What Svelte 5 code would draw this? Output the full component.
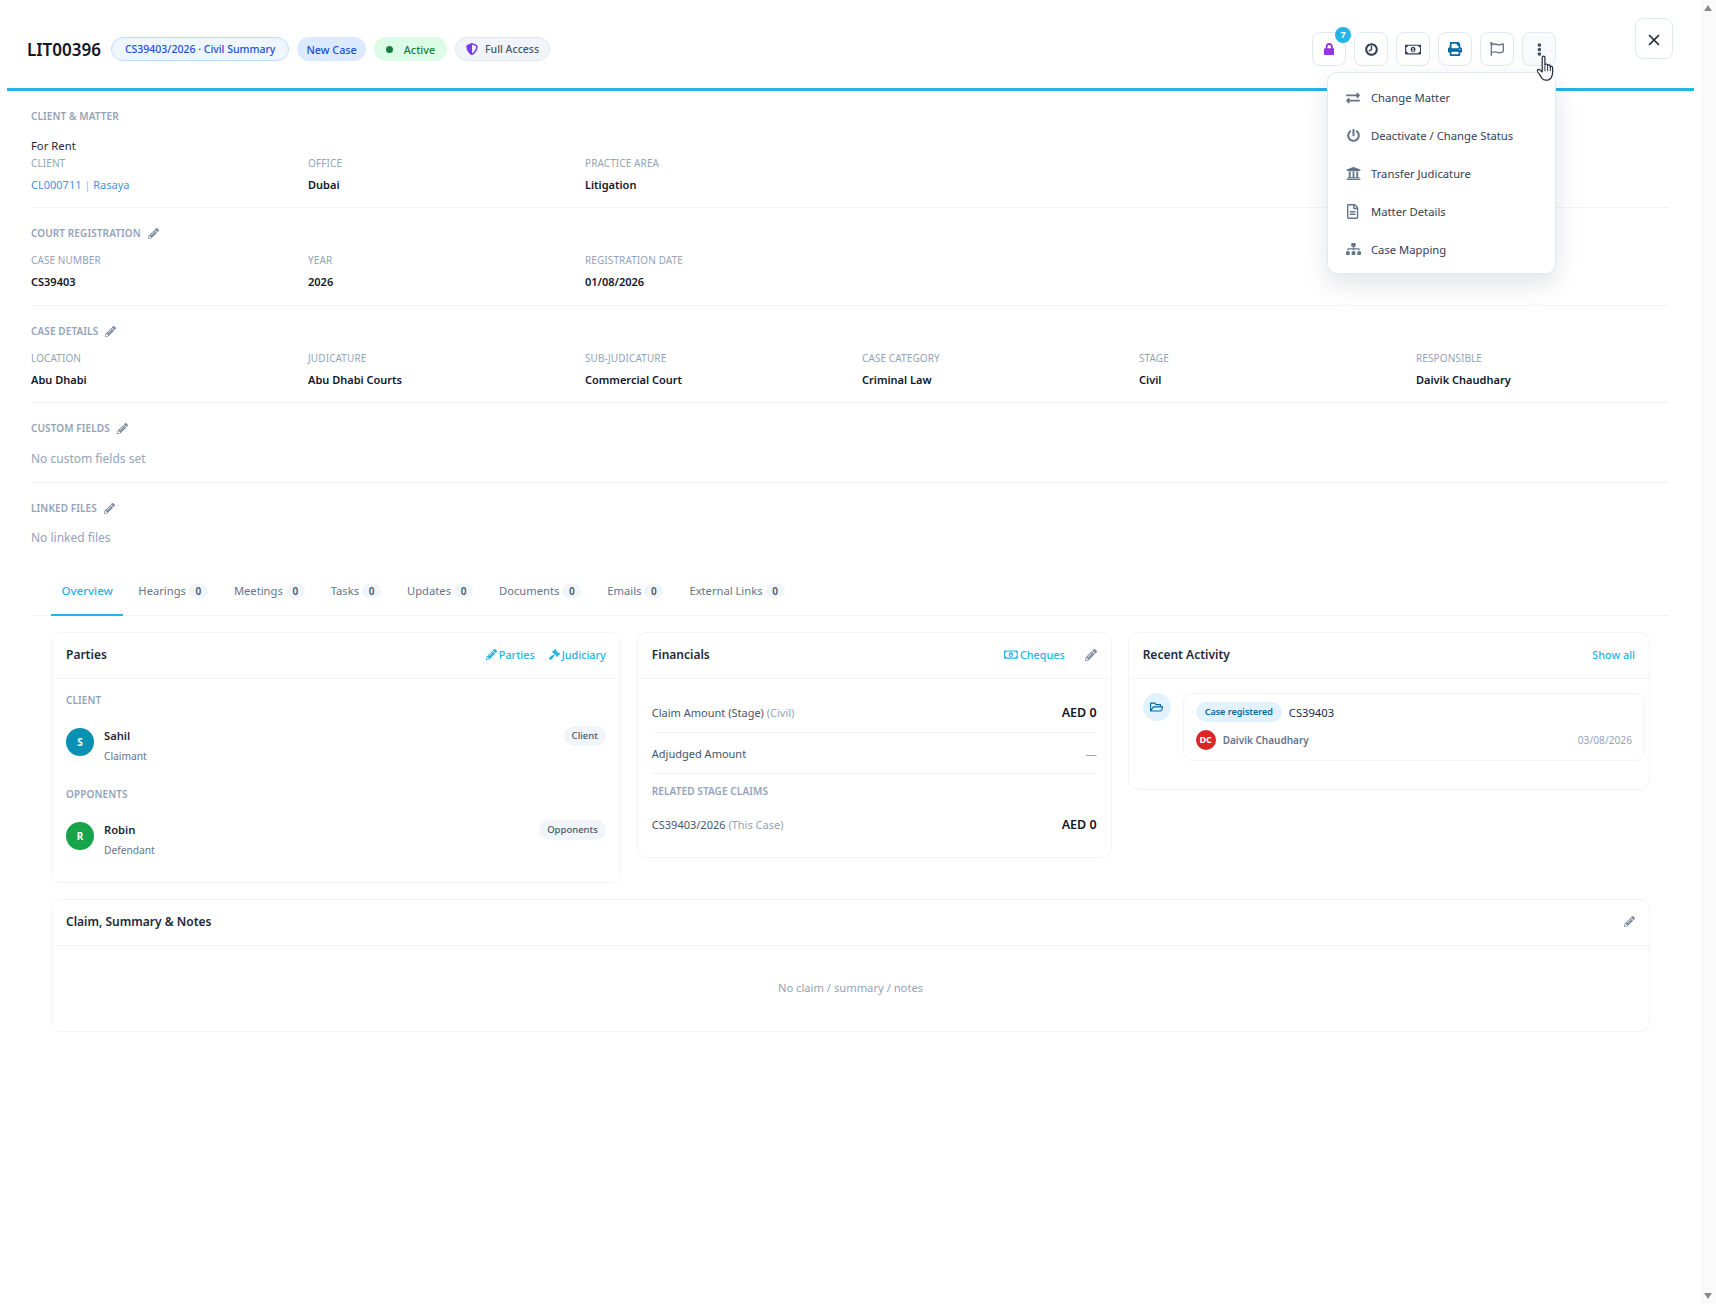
<script lang="ts">
  const ICONS: Record<string, [number, string]> = {
    pen: [512, 'M497.9 142.1l-46.1 46.1c-4.7 4.7-12.3 4.7-17 0l-111-111c-4.7-4.7-4.7-12.3 0-17l46.1-46.1c18.7-18.7 49.1-18.7 67.9 0l60.1 60.1c18.8 18.7 18.8 49.1 0 67.9zM284.2 99.8L21.6 362.4.4 483.9c-2.9 16.4 11.4 30.6 27.8 27.8l121.5-21.3 262.6-262.6c4.7-4.7 4.7-12.3 0-17l-111-111c-4.8-4.7-12.4-4.7-17.1 0zM124.1 339.9c-5.5-5.5-5.5-14.3 0-19.8l154-154c5.5-5.5 14.3-5.5 19.8 0s5.5 14.3 0 19.8l-154 154c-5.5 5.5-14.3 5.5-19.8 0zM88 424h48v36.3l-64.5 11.3-31.1-31.1L51.7 376H88v48z'],
    lock: [448, 'M400 224h-24v-72C376 68.2 307.8 0 224 0S72 68.2 72 152v72H48c-26.5 0-48 21.500-48 48v192c0 26.500 21.500 48 48 48h352c26.500 0 48-21.500 48-48V272c0-26.500-21.500-48-48-48zm-104 0H152v-72c0-39.700 32.300-72 72-72s72 32.300 72 72v72z'],
    dots: [192, 'M96 184c39.800 0 72 32.200 72 72s-32.200 72-72 72-72-32.200-72-72 32.200-72 72-72zM24 80c0 39.800 32.200 72 72 72s72-32.200 72-72S135.800 8 96 8 24 40.200 24 80zm0 352c0 39.800 32.200 72 72 72s72-32.200 72-72-32.200-72-72-72-72 32.200-72 72z'],
    print: [512, 'M448 192V77.250c0-8.490-3.370-16.620-9.370-22.630L393.370 9.370c-6-6-14.140-9.370-22.630-9.370H96C78.330 0 64 14.330 64 32v160c-35.350 0-64 28.650-64 64v112c0 8.840 7.160 16 16 16h48v96c0 17.670 14.330 32 32 32h320c17.670 0 32-14.330 32-32v-96h48c8.840 0 16-7.160 16-16V256c0-35.350-28.650-64-64-64zm-64 256H128v-96h256v96zm0-224H128V64h192v48c0 8.840 7.160 16 16 16h48v96zm48 72c-13.250 0-24-10.750-24-24 0-13.260 10.750-24 24-24s24 10.740 24 24c0 13.250-10.750 24-24 24z'],
    exchange: [512, 'M0 168v-16c0-13.255 10.745-24 24-24h360V80c0-21.367 25.899-32.042 40.971-16.971l80 80c9.372 9.373 9.372 24.569 0 33.941l-80 80C409.956 271.982 384 261.456 384 240v-48H24c-13.255 0-24-10.745-24-24zm488 152H128v-48c0-21.314-25.862-32.080-40.971-16.971l-80 80c-9.372 9.373-9.372 24.569 0 33.941l80 80C102.057 463.997 128 453.437 128 432v-48h360c13.255 0 24-10.745 24-24v-16c0-13.255-10.745-24-24-24z'],
    power: [512, 'M400 54.100c63 45 104 118.600 104 201.900 0 136.800-110.800 247.700-247.500 248C120 504.300 8.200 393 8 256.400 7.900 173.100 48.900 99.300 111.800 54.200c11.700-8.300 28-4.800 35 7.700L162.600 90c5.900 10.500 3.100 23.800-6.600 31-41.500 30.800-68 79.600-68 134.900-.1 92.300 74.500 168.100 168 168.100 91.600 0 168.600-74.200 168-169.100-.3-51.800-24.700-101.800-68.100-134-9.700-7.200-12.400-20.500-6.500-30.900l15.800-28.100c7-12.400 23.200-16.100 34.800-7.800zM296 264V24c0-13.300-10.700-24-24-24h-32c-13.300 0-24 10.700-24 24v240c0 13.300 10.700 24 24 24h32c13.300 0 24-10.700 24-24z'],
    bank: [512, 'M496 128v16a8 8 0 0 1-8 8h-24v12c0 6.627-5.373 12-12 12H60c-6.627 0-12-5.373-12-12v-12H24a8 8 0 0 1-8-8v-16a8 8 0 0 1 4.941-7.392l232-88a7.996 7.996 0 0 1 6.118 0l232 88A8 8 0 0 1 496 128zm-24 304H40c-13.255 0-24 10.745-24 24v16a8 8 0 0 0 8 8h464a8 8 0 0 0 8-8v-16c0-13.255-10.745-24-24-24zM96 192v192H60c-6.627 0-12 5.373-12 12v20h416v-20c0-6.627-5.373-12-12-12h-36V192h-64v192h-64V192h-64v192h-64V192H96z'],
    sitemap: [640, 'M128 352H32c-17.670 0-32 14.330-32 32v96c0 17.670 14.330 32 32 32h96c17.670 0 32-14.330 32-32v-96c0-17.670-14.330-32-32-32zm-24-80h192v48h48v-48h192v48h48v-57.590c0-21.170-17.230-38.410-38.410-38.410H344v-64h40c17.670 0 32-14.330 32-32V32c0-17.670-14.330-32-32-32H256c-17.670 0-32 14.330-32 32v96c0 17.670 14.330 32 32 32h40v64H94.410C73.230 224 56 241.230 56 262.410V320h48v-48zm264 80h-96c-17.670 0-32 14.330-32 32v96c0 17.670 14.330 32 32 32h96c17.670 0 32-14.330 32-32v-96c0-17.670-14.330-32-32-32zm240 0h-96c-17.670 0-32 14.330-32 32v96c0 17.670 14.330 32 32 32h96c17.670 0 32-14.330 32-32v-96c0-17.670-14.330-32-32-32z'],
    gavel: [512, 'M504.971 199.362l-22.627-22.627c-9.373-9.373-24.569-9.373-33.941 0l-5.657 5.657L329.608 69.255l5.657-5.657c9.373-9.373 9.373-24.569 0-33.941L312.638 7.029c-9.373-9.373-24.569-9.373-33.941 0L154.246 131.480c-9.373 9.373-9.373 24.569 0 33.941l22.627 22.627c9.373 9.373 24.569 9.373 33.941 0l5.657-5.657 39.598 39.598-81.040 81.040-5.657-5.657c-12.497-12.497-32.758-12.497-45.255 0L9.373 412.118c-12.497 12.497-12.497 32.758 0 45.255l45.255 45.255c12.497 12.497 32.758 12.497 45.255 0l114.745-114.745c12.497-12.497 12.497-32.758 0-45.255l-5.657-5.657 81.040-81.040 39.598 39.598-5.657 5.657c-9.373 9.373-9.373 24.569 0 33.941l22.627 22.627c9.373 9.373 24.569 9.373 33.941 0l124.451-124.451c9.372-9.372 9.372-24.568 0-33.941z'],
    money: [640, 'M320 144c-53.020 0-96 50.140-96 112 0 61.850 42.980 112 96 112 53 0 96-50.130 96-112 0-61.860-42.980-112-96-112zm40 168c0 4.420-3.580 8-8 8h-64c-4.420 0-8-3.580-8-8v-16c0-4.420 3.580-8 8-8h16v-55.440l-.47.31a7.992 7.992 0 0 1-11.090-2.220l-8.880-13.310a7.992 7.992 0 0 1 2.220-11.090l15.330-10.220a23.990 23.990 0 0 1 13.310-4.030H328c4.420 0 8 3.580 8 8v88h16c4.420 0 8 3.580 8 8v16zM608 64H32C14.330 64 0 78.330 0 96v320c0 17.670 14.330 32 32 32h576c17.670 0 32-14.330 32-32V96c0-17.670-14.330-32-32-32zm-16 272c-35.350 0-64 28.650-64 64H112c0-35.350-28.650-64-64-64V176c35.350 0 64-28.650 64-64h416c0 35.350 28.650 64 64 64v160z'],
    flag: [512, 'M336.174 80c-49.132 0-93.305-32-161.913-32-31.301 0-58.303 6.482-80.721 15.168a48.040 48.040 0 0 0 2.142-20.727C93.067 19.575 74.167 1.594 51.201.104 23.242-1.710 0 20.431 0 48c0 17.764 9.657 33.262 24 41.562V496c0 8.837 7.163 16 16 16h16c8.837 0 16-7.163 16-16v-83.443C109.869 395.280 143.259 384 199.826 384c49.132 0 93.305 32 161.913 32 58.479 0 101.972-22.617 128.548-39.981C503.846 367.161 512 352.051 512 335.855V95.937c0-34.459-35.264-57.768-66.870-44.030C409.193 67.530 371.150 80 336.174 80zM464 336c-21.783 15.412-60.824 32-102.261 32-59.945 0-102.002-32-161.913-32-43.361 0-96.379 9.403-127.826 24V128c21.784-15.412 60.824-32 102.261-32 59.945 0 102.002 32 161.913 32 43.271 0 96.321-17.357 127.826-32v240z'],
    file: [384, 'M288 248v28c0 6.600-5.400 12-12 12H108c-6.600 0-12-5.400-12-12v-28c0-6.600 5.400-12 12-12h168c6.600 0 12 5.400 12 12zm-12 72H108c-6.600 0-12 5.400-12 12v28c0 6.600 5.400 12 12 12h168c6.600 0 12-5.400 12-12v-28c0-6.600-5.400-12-12-12zm108-188.100V464c0 26.500-21.500 48-48 48H48c-26.500 0-48-21.500-48-48V48C0 21.500 21.500 0 48 0h204.100C264.800 0 277 5.100 286 14.100L369.900 98c9 8.900 14.100 21.200 14.100 33.900zm-128-80V128h76.100L256 51.900zM336 464V176H232c-13.300 0-24-10.700-24-24V48H48v416h288z'],
    folder: [576, 'M527.900 224H480v-48c0-26.500-21.500-48-48-48H272l-64-64H48C21.500 64 0 85.500 0 112v288c0 26.500 21.500 48 48 48h400c16.500 0 31.900-8.500 40.700-22.600l79.900-128c20-31.900-3-73.400-40.700-73.400zM48 118c0-3.300 2.700-6 6-6h134.100l64 64H426c3.300 0 6 2.700 6 6v42H152c-16.800 0-32.400 8.800-41.100 23.200L48 351.400zm400 282H72l77.200-128H528z'],
    shield: [512, 'M466.500 83.700l-192-80a48.150 48.150 0 0 0-36.900 0l-192 80C27.700 91.100 16 108.600 16 128c0 198.500 114.500 335.700 221.500 380.300 11.800 4.900 25.100 4.900 36.900 0C360.100 472.600 496 349.300 496 128c0-19.400-11.700-36.900-29.500-44.300zM256.100 446.300l-.1-381 175.900 73.300c-3.300 151.400-82.100 261.100-175.800 307.700z'],
    clock: [512, 'M256 8C119 8 8 119 8 256s111 248 248 248 248-111 248-248S393 8 256 8zm0 416c-93 0-168-75-168-168S163 88 256 88s168 75 168 168-75 168-168 168zm-28-312h56v168l-120 66-26-48 90-48z'],
  };

  const tabs = [
    ['Hearings', 0], ['Meetings', 0], ['Tasks', 0], ['Updates', 0],
    ['Documents', 0], ['Emails', 0], ['External Links', 0],
  ];

  const menu: [string, number, string][] = [
    ['exchange', 14, 'Change Matter'],
    ['power', 13, 'Deactivate / Change Status'],
    ['bank', 15, 'Transfer Judicature'],
    ['file', 15, 'Matter Details'],
    ['sitemap', 12, 'Case Mapping'],
  ];

  const court = [['Case Number', 'CS39403'], ['Year', '2026'], ['Registration Date', '01/08/2026']];
  const details = [
    ['Location', 'Abu Dhabi'], ['Judicature', 'Abu Dhabi Courts'], ['Sub-Judicature', 'Commercial Court'],
    ['Case Category', 'Criminal Law'], ['Stage', 'Civil'], ['Responsible', 'Daivik Chaudhary'],
  ];
</script>

{#snippet icon(name: string, size: number, color: string)}
  <svg class="icon" width={(size * ICONS[name][0]) / 512} height={size} viewBox="0 0 {ICONS[name][0]} 512" fill={color} aria-hidden="true">
    <path d={ICONS[name][1]} />
  </svg>
{/snippet}

{#snippet secHead(title: string, editable: boolean)}
  <div class="sec-head">
    <span>{title}</span>
    {#if editable}{@render icon('pen', 11, '#8490a3')}{/if}
  </div>
{/snippet}

{#snippet field(label: string, value: string)}
  <div class="field">
    <div class="f-label">{label}</div>
    <div class="f-value">{value}</div>
  </div>
{/snippet}

<div class="page">
  <div class="main">
    <header class="top">
      <h1>LIT00396</h1>
      <span class="pill pill-ref">CS39403/2026 · Civil Summary</span>
      <span class="pill pill-new">New Case</span>
      <span class="pill pill-active"><i class="dot"></i>Active</span>
      <span class="pill pill-access">{@render icon('shield', 12, '#7c3aed')}Full Access</span>

      <div class="actions">
        <button class="act">
          {@render icon('lock', 12, '#9333ea')}
          <span class="act-badge">7</span>
        </button>
        <button class="act">{@render icon('clock', 13, '#334155')}</button>
        <button class="act">{@render icon('money', 13, '#334155')}</button>
        <button class="act">{@render icon('print', 14, '#0369a1')}</button>
        <button class="act">{@render icon('flag', 14, '#64748b')}</button>
        <button class="act act-on">{@render icon('dots', 13, '#475569')}</button>

        <div class="menu">
          {#each menu as [ic, size, label]}
            <div class="menu-item">
              <span class="menu-ic">{@render icon(ic, size, '#64748b')}</span>
              {label}
            </div>
          {/each}
        </div>

        <svg class="cursor" width="20" height="27" viewBox="0 0 18 25" aria-hidden="true">
          <path d="M5.500 2.300c0-1.600 2.500-1.600 2.500 0v7c.2-1.400 2.400-1.300 2.500.2v.6c.3-1.300 2.300-1.200 2.400.3v.8c.4-1 2.100-.8 2.200.6.200 2.300.1 5-.4 7-.5 2.200-1.500 3.600-3.400 4.200-2.300.6-4.800.2-6-1.400L1.300 15.500c-1-1.300.6-2.900 1.900-1.800l2.300 2z" fill="#fff" stroke="#1f2937" stroke-width="1.100" stroke-linejoin="round" />
          <path d="M8 10v5M10.500 10.500V15M13 11v4" stroke="#1f2937" stroke-width=".9" fill="none" />
        </svg>
      </div>

      <button class="close" aria-label="Close">
        <svg width="14" height="14" viewBox="0 0 14 14" aria-hidden="true">
          <path d="M2.500 2.500l9 9M11.500 2.500l-9 9" stroke="#1e293b" stroke-width="1.700" stroke-linecap="round" />
        </svg>
      </button>
    </header>

    <div class="body">
      <section class="sec sec-first">
        {@render secHead('Client & Matter', false)}
        <div class="rent">For Rent</div>
        <div class="grid6">
          <div class="field">
            <div class="f-label">Client</div>
            <div class="f-link">CL000711 <span class="sep">|</span> Rasaya</div>
          </div>
          {@render field('Office', 'Dubai')}
          {@render field('Practice Area', 'Litigation')}
        </div>
      </section>

      <section class="sec">
        {@render secHead('Court Registration', true)}
        <div class="grid6">
          {#each court as [l, v]}{@render field(l, v)}{/each}
        </div>
      </section>

      <section class="sec sec-details">
        {@render secHead('Case Details', true)}
        <div class="grid6">
          {#each details as [l, v]}{@render field(l, v)}{/each}
        </div>
      </section>

      <section class="sec sec-custom">
        {@render secHead('Custom Fields', true)}
        <div class="none">No custom fields set</div>
      </section>

      <section class="sec sec-last">
        {@render secHead('Linked Files', true)}
        <div class="none">No linked files</div>
      </section>

      <nav class="tabs">
        <span class="tab tab-on">Overview</span>
        {#each tabs as [name, n]}
          <span class="tab">{name}<b class="count">{n}</b></span>
        {/each}
      </nav>

      <div class="cards">
        <div class="card">
          <div class="card-head">
            <h3>Parties</h3>
            <div class="links">
              <span class="link">{@render icon('pen', 11, '#22b5e6')}Parties</span>
              <span class="link">{@render icon('gavel', 11, '#22b5e6')}Judiciary</span>
            </div>
          </div>
          <div class="card-body parties">
            <div class="group">Client</div>
            <div class="party">
              <span class="avatar av-blue">S</span>
              <div class="who"><strong>Sahil</strong><small>Claimant</small></div>
              <span class="role">Client</span>
            </div>
            <div class="group group-2">Opponents</div>
            <div class="party">
              <span class="avatar av-green">R</span>
              <div class="who"><strong>Robin</strong><small>Defendant</small></div>
              <span class="role">Opponents</span>
            </div>
          </div>
        </div>

        <div class="card">
          <div class="card-head">
            <h3>Financials</h3>
            <div class="links links-fin">
              <span class="link">{@render icon('money', 11, '#22b5e6')}Cheques</span>
              {@render icon('pen', 12, '#8490a3')}
            </div>
          </div>
          <div class="card-body fin">
            <div class="fin-row fin-line">
              <span>Claim Amount (Stage) <em>(Civil)</em></span>
              <strong>AED 0</strong>
            </div>
            <div class="fin-row fin-line">
              <span>Adjudged Amount</span>
              <span class="dash">—</span>
            </div>
            <div class="group fin-group">Related Stage Claims</div>
            <div class="fin-row">
              <span>CS39403/2026 <em>(This Case)</em></span>
              <strong>AED 0</strong>
            </div>
          </div>
        </div>

        <div class="card">
          <div class="card-head">
            <h3>Recent Activity</h3>
            <div class="links"><span class="link">Show all</span></div>
          </div>
          <div class="card-body activity">
            <span class="act-ic">{@render icon('folder', 12, '#0369a1')}</span>
            <div class="event">
              <div class="event-top">
                <span class="ev-tag">Case registered</span>
                <span class="ev-ref">CS39403</span>
              </div>
              <div class="event-bottom">
                <span class="av-dc">DC</span>
                <span class="ev-who">Daivik Chaudhary</span>
                <span class="ev-date">03/08/2026</span>
              </div>
            </div>
          </div>
        </div>
      </div>

      <div class="card card-wide">
        <div class="card-head">
          <h3>Claim, Summary &amp; Notes</h3>
          {@render icon('pen', 11, '#8490a3')}
        </div>
        <div class="empty">No claim / summary / notes</div>
      </div>
    </div>
  </div>

  <div class="scrollbar">
    <i class="arrow arrow-up"></i>
    <i class="arrow arrow-down"></i>
  </div>
</div>

<style>
  :global(body) {
    margin: 0;
    background: #fff;
    font-family: 'Noto Sans', 'Open Sans', sans-serif;
    color: #0f172a;
  }

  .page {
    display: flex;
    height: 1304px;
    overflow: hidden;
  }

  .main {
    flex: 1;
    min-width: 0;
    padding-left: 7px;
    padding-right: 7px;
  }

  .icon {
    display: block;
    flex-shrink: 0;
  }

  button {
    font: inherit;
    padding: 0;
    cursor: pointer;
  }

  /* header */
  .top {
    display: flex;
    align-items: center;
    height: 78px;
    padding: 10px 0 0 20px;
    border-bottom: 3px solid #22b5e6;
    gap: 8px;
    position: relative;
    box-sizing: content-box;
  }

  h1 {
    margin: 0 2px 0 0;
    font-size: 17px;
    font-weight: 600;
    color: #0f172a;
  }

  .pill {
    display: inline-flex;
    align-items: center;
    height: 24px;
    box-sizing: border-box;
    padding: 0 12px;
    border-radius: 12px;
    font-size: 10.800px;
    font-weight: 500;
  }

  .pill-ref {
    background: #eff6ff;
    border: 1px solid #bfdbfe;
    color: #1d4ed8;
    font-size: 10.500px;
    padding: 0 13px;
  }

  .pill-new {
    background: #dbeafe;
    color: #1d4ed8;
    padding: 0 9px;
  }

  .pill-active {
    background: #dcfce7;
    color: #15803d;
  }

  .dot {
    width: 7px;
    height: 7px;
    border-radius: 50%;
    background: #15803d;
    margin-right: 11px;
  }

  .pill-access {
    background: #f1f5f9;
    border: 1px solid #e2e8f0;
    color: #475569;
    gap: 7px;
    padding: 0 10px;
    font-size: 10.500px;
  }

  .actions {
    position: absolute;
    right: 138px;
    top: 32px;
    display: flex;
    gap: 8px;
  }

  .act {
    width: 34px;
    height: 34px;
    border: 1px solid #e2e8f0;
    border-radius: 8px;
    background: #fff;
    display: flex;
    align-items: center;
    justify-content: center;
    position: relative;
  }

  .act-on {
    background: #f8fafc;
  }

  .act-badge {
    position: absolute;
    top: -6px;
    right: -6px;
    width: 16px;
    height: 16px;
    border-radius: 50%;
    background: #22b5e6;
    color: #fff;
    font-size: 9px;
    font-weight: 700;
    line-height: 16px;
    text-align: center;
  }

  .menu {
    position: absolute;
    right: 0;
    top: 40px;
    width: 229px;
    height: 202px;
    box-sizing: border-box;
    padding: 6px 0;
    background: #fff;
    border: 1px solid #e2e8f0;
    border-radius: 10px;
    box-shadow: 0 10px 25px rgba(15, 23, 42, 0.12);
    z-index: 5;
  }

  .menu-item {
    display: flex;
    align-items: center;
    height: 37.800px;
    padding-left: 17px;
    font-size: 11.250px;
    color: #334155;
  }

  .menu-ic {
    width: 16px;
    margin-right: 10px;
    flex-shrink: 0;
    display: flex;
    justify-content: center;
  }

  .cursor {
    position: absolute;
    right: 0;
    top: 23px;
    z-index: 6;
  }

  .close {
    position: absolute;
    left: 1628px;
    top: 18px;
    width: 38px;
    height: 41px;
    padding-top: 2px;
    border: 1px solid #e2e8f0;
    border-radius: 8px;
    background: #fff;
    display: flex;
    align-items: center;
    justify-content: center;
  }

  /* sections */
  .body {
    padding: 0 25px 0 24px;
  }

  .sec {
    padding: 18px 0 15px;
    border-bottom: 1px solid #f1f5f9;
  }

  .sec-first {
    padding: 18px 0 14px;
  }

  .sec-details {
    padding-bottom: 14px;
  }

  .sec-last {
    border-bottom: 0;
    padding-bottom: 0;
  }

  .sec-head {
    display: flex;
    align-items: center;
    gap: 7px;
    height: 14px;
    font-size: 10px;
    font-weight: 600;
    letter-spacing: 0.1px;
    text-transform: uppercase;
    color: #94a3b8;
  }

  .rent {
    font-size: 11.300px;
    color: #1e293b;
    margin-top: 15px;
    line-height: 16px;
  }

  .grid6 {
    display: grid;
    grid-template-columns: repeat(6, 1fr);
    gap: 24px;
    margin-top: 13px;
  }

  .sec-first .grid6 {
    margin-top: 2px;
  }

  .f-label {
    font-size: 10px;
    letter-spacing: 0.1px;
    text-transform: uppercase;
    color: #94a3b8;
    line-height: 14px;
  }

  .f-value,
  .f-link {
    margin-top: 7px;
    font-size: 11px;
    line-height: 16px;
    font-weight: 600;
    color: #0f172a;
  }

  .f-link {
    font-weight: 400;
    color: #4b8fe8;
  }

  .sep {
    color: #a5b4fc;
  }

  .none {
    margin: 14px 0 0;
    font-size: 12px;
    line-height: 18px;
    color: #94a3b8;
  }

  .sec-custom .none {
    margin: 15px 0 -1px;
  }

  /* tabs */
  .tabs {
    display: flex;
    margin-top: 22px;
    padding-left: 20px;
    height: 46px;
    border-bottom: 1px solid #f1f5f9;
    gap: 4px;
    box-sizing: content-box;
  }

  .tab {
    display: flex;
    align-items: center;
    gap: 3px;
    padding: 0 11px 2px;
    height: 47px;
    box-sizing: border-box;
    border-bottom: 2px solid transparent;
    font-size: 11.200px;
    color: #64748b;
  }

  .tab-on {
    color: #22b5e6;
    font-size: 11.500px;
    font-weight: 500;
    padding: 0 10.500px 2px;
    border-bottom-color: #22b5e6;
  }

  .count {
    display: inline-block;
    box-sizing: border-box;
    min-width: 19px;
    padding: 0 3px;
    border-radius: 7px;
    background: #f1f5f9;
    font-size: 10px;
    font-weight: 600;
    line-height: 14px;
    text-align: center;
    color: #475569;
  }

  /* cards */
  .cards {
    display: grid;
    grid-template-columns: 1.2fr 1fr 1.1fr;
    gap: 16px;
    align-items: start;
    margin: 16px 19px 0 20px;
  }

  .card {
    border: 1px solid #f1f5f9;
    border-radius: 10px;
    background: #fff;
  }

  .card-head {
    display: flex;
    align-items: center;
    justify-content: space-between;
    height: 46px;
    box-sizing: border-box;
    padding: 0 14px 2px;
    border-bottom: 1px solid #f1f5f9;
  }

  h3 {
    margin: 0;
    font-size: 12px;
    font-weight: 600;
    color: #1e293b;
  }

  .links {
    display: flex;
    align-items: center;
    gap: 14px;
  }

  .links-fin {
    gap: 20px;
  }

  .link {
    display: inline-flex;
    align-items: center;
    gap: 2px;
    font-size: 10.800px;
    font-weight: 500;
    color: #22b5e6;
  }

  .parties {
    padding: 14px 14px 24px;
  }

  .group {
    font-size: 10px;
    font-weight: 600;
    letter-spacing: 0.1px;
    text-transform: uppercase;
    color: #94a3b8;
    line-height: 14px;
  }

  .group-2 {
    margin-top: 23px;
  }

  .party {
    display: flex;
    align-items: flex-start;
    gap: 10px;
    margin-top: 22px;
  }

  .avatar {
    width: 28px;
    height: 28px;
    margin-top: -1px;
    border-radius: 50%;
    display: flex;
    align-items: center;
    justify-content: center;
    font-size: 10px;
    font-weight: 700;
    color: #fff;
  }

  .av-blue {
    background: #0891b2;
  }

  .av-green {
    background: #16a34a;
  }

  .who {
    flex: 1;
    margin-top: -1px;
    display: flex;
    flex-direction: column;
    gap: 5px;
  }

  .who strong {
    font-size: 11.200px;
    font-weight: 600;
    line-height: 16px;
    color: #1e293b;
  }

  .who small {
    font-size: 10.200px;
    line-height: 15px;
    color: #64748b;
  }

  .role {
    margin-top: -3px;
    padding: 0 8px;
    height: 20px;
    line-height: 20px;
    border-radius: 10px;
    background: #f1f5f9;
    font-size: 9.500px;
    font-weight: 500;
    color: #475569;
  }

  .fin {
    padding: 13px 14px 0;
  }

  .fin-row {
    display: flex;
    justify-content: space-between;
    align-items: center;
    height: 40px;
    font-size: 11px;
    color: #475569;
  }

  .fin-line {
    border-bottom: 1px solid #f1f5f9;
  }

  .fin-row em {
    font-style: normal;
    color: #94a3b8;
  }

  .fin-row strong {
    font-size: 12.500px;
    font-weight: 600;
    color: #0f172a;
  }

  .dash {
    color: #94a3b8;
  }

  .fin-group {
    margin-top: 10px;
  }

  .fin-group + .fin-row {
    height: 34px;
    margin: 9px 0 16px;
  }

  .activity {
    display: flex;
    gap: 12px;
    padding: 14px 4px 28px 14px;
  }

  .act-ic {
    width: 28px;
    height: 28px;
    flex-shrink: 0;
    border-radius: 50%;
    background: #e0f2fe;
    display: flex;
    align-items: center;
    justify-content: center;
  }

  .event {
    flex: 1;
    border: 1px solid #f1f5f9;
    border-radius: 10px;
    padding: 8px 12px 10px;
  }

  .event-top,
  .event-bottom {
    display: flex;
    align-items: center;
  }

  .event-bottom {
    margin-top: 8px;
    gap: 7px;
  }

  .ev-tag {
    height: 20px;
    line-height: 20px;
    padding: 0 9px;
    border-radius: 10px;
    background: #e0f2fe;
    font-size: 9px;
    font-weight: 600;
    color: #0369a1;
    margin-right: 7px;
  }

  .ev-ref {
    font-size: 11.200px;
    color: #1e293b;
  }

  .av-dc {
    width: 20px;
    height: 20px;
    border-radius: 50%;
    background: #dc2626;
    color: #fff;
    font-size: 9px;
    font-weight: 700;
    line-height: 20px;
    text-align: center;
  }

  .ev-who {
    flex: 1;
    font-size: 10px;
    font-weight: 600;
    color: #64748b;
  }

  .ev-date {
    font-size: 10.200px;
    color: #94a3b8;
  }

  .card-wide {
    margin: 16px 19px 0 20px;
  }

  .empty {
    height: 83px;
    padding-bottom: 2px;
    display: flex;
    align-items: center;
    justify-content: center;
    font-size: 11.200px;
    color: #94a3b8;
  }

  .scrollbar {
    width: 15px;
    background: #fafafa;
    position: relative;
    flex-shrink: 0;
  }

  .arrow {
    position: absolute;
    left: 3px;
    width: 0;
    height: 0;
    border-left: 4.500px solid transparent;
    border-right: 4.500px solid transparent;
  }

  .arrow-up {
    top: 5px;
    border-bottom: 6px solid #8a8a8a;
  }

  .arrow-down {
    bottom: 5px;
    border-top: 6px solid #8a8a8a;
  }
</style>
